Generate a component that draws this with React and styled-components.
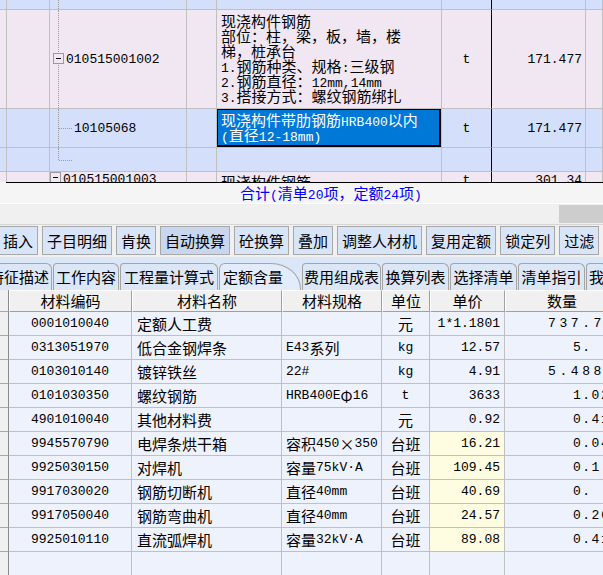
import React from 'react';
import styled, { createGlobalStyle } from 'styled-components';

const CJK = `"Noto Sans CJK SC", "Noto Sans CJK JP", sans-serif`;
const MONO = `"Liberation Mono", "DejaVu Sans Mono", monospace`;

const GlobalStyle = createGlobalStyle`
  html, body { margin: 0; padding: 0; background: #f0f0f0; overflow: hidden; }
  body { width: 603px; height: 575px; font-family: ${CJK}; }
  * { box-sizing: border-box; }
`;

const Page = styled.div`
  width: 603px;
  height: 575px;
  overflow: hidden;
  display: flex;
  flex-direction: column;
  background: #f0f0f0;
`;

const Latin = styled.span`
  font-family: ${MONO};
  font-size: 13px;
`;

function Mixed({ text }) {
  const parts = String(text).split(/([\x21-\x7E\u00B7]+(?: [\x21-\x7E\u00B7]+)*)/);
  return parts.map((s, i) => (i % 2 ? <Latin key={i}>{s}</Latin> : s));
}

/* ---------------- top grid ---------------- */
const TOP_COLS = '5px 45px 137px 30px 225px 50px 94px 1fr';
const TONES = { pink: '#f1e7f3', blue: '#d4e0fb' };

const TopGrid = styled.div`
  height: 182px;
  flex: none;
  overflow: hidden;
  display: flex;
  flex-direction: column;
`;

const TopRow = styled.div`
  flex: none;
  display: grid;
  grid-template-columns: ${TOP_COLS};
  height: ${(p) => p.$h}px;
  background: ${(p) => TONES[p.$tone]};
`;

const TopCell = styled.div`
  position: relative;
  min-width: 0;
  overflow: hidden;
  white-space: nowrap;
  display: flex;
  align-items: ${(p) => (p.$top ? 'flex-start' : 'center')};
  justify-content: ${(p) => (p.$align === 'right' ? 'flex-end' : p.$align === 'center' ? 'center' : 'flex-start')};
  padding: ${(p) => (p.$top ? '1px 3px 0' : '0 3px')};
  border-right: 1px solid ${(p) => (p.$dark ? '#000' : '#c0c0c0')};
  border-bottom: 1px solid #c0c0c0;
  font: 15px/15px ${CJK};
  color: #000;
`;

const NumText = styled.span`
  font: 13px/15px ${MONO};
  color: #000;
`;

const CodeCell = styled.div`
  position: relative;
  min-width: 0;
  overflow: hidden;
  white-space: nowrap;
  display: flex;
  align-items: ${(p) => (p.$top ? 'flex-start' : 'center')};
  padding: ${(p) => (p.$top ? '1px 0 0' : '0')} 0 0 ${(p) => (p.$box ? 3 : 24)}px;
  border-right: 1px solid #c0c0c0;
  border-bottom: 1px solid #c0c0c0;
  font: 13px/15px ${MONO};
  color: #000;
  &::before {
    content: '';
    display: ${(p) => (p.$vline === 'none' ? 'none' : 'block')};
    position: absolute;
    left: 8px;
    top: 0;
    bottom: ${(p) => (p.$vline === 'half' ? '50%' : '0')};
    border-left: 1px dotted #9c9c9c;
  }
  &::after {
    content: '';
    display: ${(p) => (p.$branch ? 'block' : 'none')};
    position: absolute;
    left: 9px;
    width: 13px;
    top: 50%;
    border-top: 1px dotted #9c9c9c;
  }
`;

const ExpandBox = styled.span`
  position: relative;
  z-index: 1;
  flex: none;
  width: 11px;
  height: 11px;
  margin: ${(p) => (p.$top ? '0' : '-1px')} 2px 0 0;
  border: 1px solid #9a9a9a;
  background: ${(p) => TONES[p.$tone]};
  &::after {
    content: '';
    position: absolute;
    left: 2px;
    top: 4px;
    width: 5px;
    height: 1px;
    background: #000;
  }
`;

const DescCell = styled.div`
  position: relative;
  min-width: 0;
  overflow: hidden;
  padding: ${(p) => (p.$top ? 2 : 3)}px 4px 0;
  border-right: 1px solid #c0c0c0;
  border-bottom: 1px solid #c0c0c0;
  background: ${(p) => (p.$selected ? '#0078d7' : 'transparent')};
  color: ${(p) => (p.$selected ? '#fff' : '#000')};
  font: 15px/15px ${CJK};
  &::after {
    content: '';
    display: ${(p) => (p.$selected ? 'block' : 'none')};
    position: absolute;
    top: -1px;
    left: -1px;
    right: 0;
    bottom: 0;
    border: 2px solid #000;
  }
`;

const DescLine = styled.div`
  white-space: nowrap;
  height: 15px;
`;

const topRows = [
  { h: 10, tone: 'blue', vline: 'full' },
  {
    h: 99,
    tone: 'pink',
    vline: 'full',
    box: true,
    code: '010515001002',
    desc: ['现浇构件钢筋', '部位：柱，梁，板，墙，楼', '梯，桩承台', '1.钢筋种类、规格:三级钢', '2.钢筋直径：12mm,14mm', '3.搭接方式：螺纹钢筋绑扎'],
    unit: 't',
    value: '171.477',
  },
  {
    h: 39,
    tone: 'blue',
    vline: 'full',
    branch: true,
    code: '10105068',
    desc: ['现浇构件带肋钢筋HRB400以内', '(直径12-18mm)'],
    selected: true,
    unit: 't',
    value: '171.477',
  },
  { h: 24, tone: 'blue', vline: 'half', branch: true },
  {
    h: 24,
    tone: 'pink',
    vline: 'none',
    box: true,
    top: true,
    code: '010515001003',
    desc: ['现浇构件钢筋'],
    unit: 't',
    value: '301.34',
  },
];

/* ---------------- footer / scroll ---------------- */
const Footer = styled.div`
  flex: none;
  height: 21px;
  display: flex;
  align-items: center;
  background: #f5f5f5;
`;

const FooterRule = styled.div`
  flex: 1;
  height: 21px;
  margin-left: 6px;
  border-top: 1px solid #000;
  padding-left: 234px;
  color: #0000ff;
  font: 15px/19px ${CJK};
  white-space: nowrap;
`;

const HScroll = styled.div`
  flex: none;
  height: 22px;
  display: flex;
  justify-content: flex-end;
  align-items: center;
  border-top: 1px solid #ffffff;
  border-bottom: 1px solid #d6d6d6;
  background: #f0f0f0;
`;

const ScrollThumb = styled.div`
  width: 44px;
  height: 18px;
  background: #cdcdcd;
`;

/* ---------------- toolbar ---------------- */
const Toolbar = styled.div`
  flex: none;
  height: 32px;
  display: flex;
  align-items: center;
  gap: 4px;
  margin-left: -2px;
  padding-bottom: 1px;
  overflow: hidden;
`;

const ToolButton = styled.div`
  flex: none;
  height: 29px;
  padding: 0 4px;
  border: 1px solid #a8a8a8;
  background: ${(p) => (p.$active ? '#c8d7ee' : '#d8e5f9')};
  font: 15px/27px ${CJK};
  color: #000;
  white-space: nowrap;
`;

const buttons = ['插入', '子目明细', '肯换', '自动换算', '砼换算', '叠加', '调整人材机', '复用定额', '锁定列', '过滤', '显示'];

/* ---------------- tabs ---------------- */
const TabBar = styled.div`
  flex: none;
  height: 33px;
  display: flex;
  align-items: flex-end;
  gap: 1px;
  margin-left: -14px;
  background: #dbe6f6;
  overflow: hidden;
`;

const Tab = styled.div`
  flex: none;
  width: ${(p) => p.$w}px;
  height: 27px;
  padding: ${(p) => (p.$selected ? '0 0 0 3px' : '0')};
  text-align: ${(p) => (p.$selected ? 'left' : 'center')};
  border: 1px solid #a4a4a4;
  border-bottom: none;
  border-radius: ${(p) => (p.$selected ? '6px 30px 0 0 / 6px 26px 0 0' : '4px 6px 0 0')};
  background: ${(p) => (p.$selected ? '#e2ecfa' : '#dbe6f6')};
  font: 15px/25px ${CJK};
  color: #000;
  white-space: nowrap;
  overflow: hidden;
`;

const tabs = [
  { t: '特征描述', w: 66 },
  { t: '工作内容', w: 66 },
  { t: '工程量计算式', w: 98 },
  { t: '定额含量', w: 82, selected: true },
  { t: '费用组成表', w: 79 },
  { t: '换算列表', w: 67 },
  { t: '选择清单', w: 67 },
  { t: '清单指引', w: 67 },
  { t: '我的收藏', w: 66 },
];

/* ---------------- bottom grid ---------------- */
const BOT_COLS = '9px 123px 150px 100px 48px 75px 114px';

const BottomGrid = styled.div`
  flex: 1;
  display: flex;
  flex-direction: column;
  overflow: hidden;
`;

const BotRow = styled.div`
  flex: none;
  display: grid;
  grid-template-columns: ${BOT_COLS};
  height: ${(p) => p.$h}px;
`;

const Gutter = styled.div`
  background: #f0f0f0;
  border-right: 1px solid #8a8a8a;
  border-bottom: 1px solid #a8a8a8;
`;

const HeadCell = styled.div`
  background: #f0f0f0;
  border-left: 1px solid #ffffff;
  border-top: 1px solid #ffffff;
  border-right: 1px solid #a0a0a0;
  border-bottom: 1px solid #a0a0a0;
  text-align: center;
  font: 15px/19px ${CJK};
  color: #000;
  white-space: nowrap;
  overflow: hidden;
`;

const DataCell = styled.div`
  min-width: 0;
  display: flex;
  align-items: center;
  justify-content: ${(p) => (p.$align === 'right' ? 'flex-end' : p.$align === 'center' ? 'center' : 'flex-start')};
  padding: 0 ${(p) => p.$pr ?? 4}px 0 ${(p) => p.$pl ?? 4}px;
  background: ${(p) => (p.$yellow ? '#fefde2' : '#eef2fd')};
  border-right: 1px solid #c0c0c0;
  border-bottom: 1px solid #c0c0c0;
  font: ${(p) => (p.$num ? `13px/15px ${MONO}` : `15px/15px ${CJK}`)};
  color: #000;
  white-space: nowrap;
  overflow: hidden;
`;

/* quantity column: the values run past the window's right edge */
const QtyCell = styled(DataCell)`
  justify-content: flex-start;
  padding: 0 0 0 ${(p) => (p.$long ? 43 : 68)}px;
  letter-spacing: ${(p) => (p.$long ? '3.6px' : '1.5px')};
  overflow: visible;
`;

const materials = [
  ['0001010040', '定额人工费', '', '元', '1*1.1801', '737.75', false, true],
  ['0313051970', '低合金钢焊条', 'E43系列', 'kg', '12.57', '5.', false],
  ['0103010140', '镀锌铁丝', '22#', 'kg', '4.91', '5.4882', false, true],
  ['0101030350', '螺纹钢筋', 'HRB400EΦ16', 't', '3633', '1.025', false],
  ['4901010040', '其他材料费', '', '元', '0.92', '0.41', false],
  ['9945570790', '电焊条烘干箱', '容积450×350', '台班', '16.21', '0.041', true],
  ['9925030150', '对焊机', '容量75kV·A', '台班', '109.45', '0.1', true],
  ['9917030020', '钢筋切断机', '直径40mm', '台班', '40.69', '0.', true],
  ['9917050040', '钢筋弯曲机', '直径40mm', '台班', '24.57', '0.26', true],
  ['9925010110', '直流弧焊机', '容量 32kV·A', '台班', '89.08', '0.41', true],
];

export default function App() {
  return (
    <Page>
      <GlobalStyle />
      <TopGrid>
        {topRows.map((r, i) => (
          <TopRow key={i} $h={r.h} $tone={r.tone}>
            <TopCell />
            <TopCell />
            <CodeCell $vline={r.vline} $branch={r.branch} $box={r.box} $top={r.top}>
              {r.box && <ExpandBox $tone={r.tone} $top={r.top} />}
              {r.code}
            </CodeCell>
            <TopCell />
            <DescCell $selected={r.selected} $top={r.top}>
              {(r.desc || []).map((line, j) => (
                <DescLine key={j}>
                  <Mixed text={line} />
                </DescLine>
              ))}
            </DescCell>
            <TopCell $dark $align="center" $top={r.top}>
              {r.unit && <NumText>{r.unit}</NumText>}
            </TopCell>
            <TopCell $align="right" $top={r.top}>
              {r.value && <NumText>{r.value}</NumText>}
            </TopCell>
            <TopCell />
          </TopRow>
        ))}
      </TopGrid>

      <Footer>
        <FooterRule>
          <Mixed text="合计(清单20项，定额24项)" />
        </FooterRule>
      </Footer>

      <HScroll>
        <ScrollThumb />
      </HScroll>

      <Toolbar>
        {buttons.map((b) => (
          <ToolButton key={b} $active={b === '自动换算'}>
            {b}
          </ToolButton>
        ))}
      </Toolbar>

      <TabBar>
        {tabs.map((t) => (
          <Tab key={t.t} $w={t.w} $selected={t.selected}>
            {t.t}
          </Tab>
        ))}
      </TabBar>

      <BottomGrid>
        <BotRow $h={22}>
          <Gutter />
          <HeadCell>材料编码</HeadCell>
          <HeadCell>材料名称</HeadCell>
          <HeadCell>材料规格</HeadCell>
          <HeadCell>单位</HeadCell>
          <HeadCell>单价</HeadCell>
          <HeadCell>数量</HeadCell>
        </BotRow>
        {materials.map((m) => (
          <BotRow key={m[0]} $h={24}>
            <Gutter />
            <DataCell $num $align="center">{m[0]}</DataCell>
            <DataCell $pl={5}>{m[1]}</DataCell>
            <DataCell>
              <Mixed text={m[2]} />
            </DataCell>
            <DataCell $align="center">
              <Mixed text={m[3]} />
            </DataCell>
            <DataCell $num $align="right" $yellow={m[6]}>
              {m[4]}
            </DataCell>
            <QtyCell $num $long={m[7]}>
              {m[5]}
            </QtyCell>
          </BotRow>
        ))}
        <BotRow $h={24}>
          <Gutter />
          <DataCell />
          <DataCell />
          <DataCell />
          <DataCell />
          <DataCell />
          <DataCell />
        </BotRow>
      </BottomGrid>
    </Page>
  );
}
